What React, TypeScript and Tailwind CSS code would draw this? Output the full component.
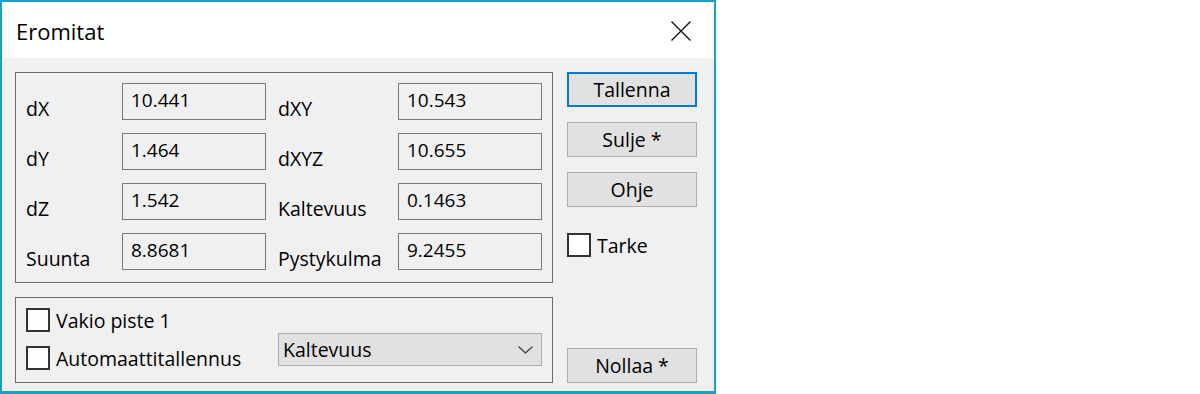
import React from 'react';

const sans = { fontFamily: '"Open Sans", "Noto Sans", sans-serif' };

const rows = [
  ['dX', '10.441', 'dXY', '10.543'],
  ['dY', '1.464', 'dXYZ', '10.655'],
  ['dZ', '1.542', 'Kaltevuus', '0.1463'],
  ['Suunta', '8.8681', 'Pystykulma', '9.2455'],
];

function Field({ value }: { value: string }) {
  return (
    <div className="h-[37px] border border-[#7a7a7a] bg-[#f0f0f0] pl-[8px] pt-[5px] text-[19px] leading-[22px] text-black">
      {value}
    </div>
  );
}

function Label({ text, className = '' }: { text: string; className?: string }) {
  return <div className={`h-[37px] pt-[14px] text-[19.5px] leading-[23px] text-black ${className}`}>{text}</div>;
}

function Check({ label }: { label: string }) {
  return (
    <div className="flex h-[24px] items-center">
      <div className="h-[24px] w-[24px] shrink-0 border-2 border-[#333333] bg-white" />
      <span className="ml-[6px] text-[19.5px] leading-[23px] text-black">{label}</span>
    </div>
  );
}

function Button({ text, primary = false }: { text: string; primary?: boolean }) {
  return (
    <button
      className={`flex h-[35px] w-[130px] items-center justify-center bg-[#e1e1e1] text-[19.5px] leading-[23px] text-black ${
        primary ? 'border-2 border-[#0078d7]' : 'border border-[#adadad]'
      }`}
    >
      {text}
    </button>
  );
}

export default function App() {
  return (
    <div className="h-[394px] w-[1200px] bg-white" style={sans}>
      <div className="flex h-[394px] w-[716px] flex-col border-2 border-b-[3px] border-[#1b9fc4]">
        {/* title bar */}
        <div className="flex h-[56px] shrink-0 items-center justify-between bg-white pl-[14px] pr-[23px]">
          <span className="pt-[3px] text-[22px] text-black">Eromitat</span>
          <svg width="20" height="20" viewBox="0 0 20 20" className="mt-[2px]">
            <path d="M0.5 0.5 L19.5 19.5 M19.5 0.5 L0.5 19.5" stroke="#111" strokeWidth="1.4" fill="none" />
          </svg>
        </div>

        {/* body */}
        <div className="flex h-[333px] shrink-0 bg-[#f0f0f0] pb-[8px] pl-[13px] pr-[17px] pt-[14px]">
          <div className="flex w-[538px] flex-col">
            <div className="h-[211px] border border-[#6d6d6d] pb-[12px] pl-[10px] pr-[10px] pt-[10px]">
              <div className="grid grid-cols-[96px_144px_132px_144px] gap-y-[13px]">
                {rows.map((r) => (
                  <React.Fragment key={r[0]}>
                    <Label text={r[0]} />
                    <Field value={r[1]} />
                    <Label text={r[2]} className="pl-[12px]" />
                    <Field value={r[3]} />
                  </React.Fragment>
                ))}
              </div>
            </div>

            <div className="mt-[14px] flex h-[86px] border border-[#6d6d6d] pl-[10px] pt-[10px]">
              <div className="flex w-[252px] flex-col gap-[14px]">
                <Check label="Vakio piste 1" />
                <Check label="Automaattitallennus" />
              </div>
              <div className="mt-[25px] flex h-[33px] w-[264px] items-center justify-between border border-[#adadad] bg-[#e1e1e1] pl-[4px] pr-[8px]">
                <span className="text-[19.5px] leading-[23px] text-black">Kaltevuus</span>
                <svg width="15" height="8" viewBox="0 0 15 8">
                  <polyline points="0.5,0.5 7.5,7 14.5,0.5" stroke="#333" strokeWidth="1.1" fill="none" />
                </svg>
              </div>
            </div>
          </div>

          <div className="ml-[14px] flex w-[130px] flex-col">
            <Button text="Tallenna" primary />
            <div className="mt-[15px]">
              <Button text="Sulje *" />
            </div>
            <div className="mt-[15px]">
              <Button text="Ohje" />
            </div>
            <div className="mt-[26px]">
              <Check label="Tarke" />
            </div>
            <div className="mt-auto">
              <Button text="Nollaa *" />
            </div>
          </div>
        </div>
      </div>
    </div>
  );
}
